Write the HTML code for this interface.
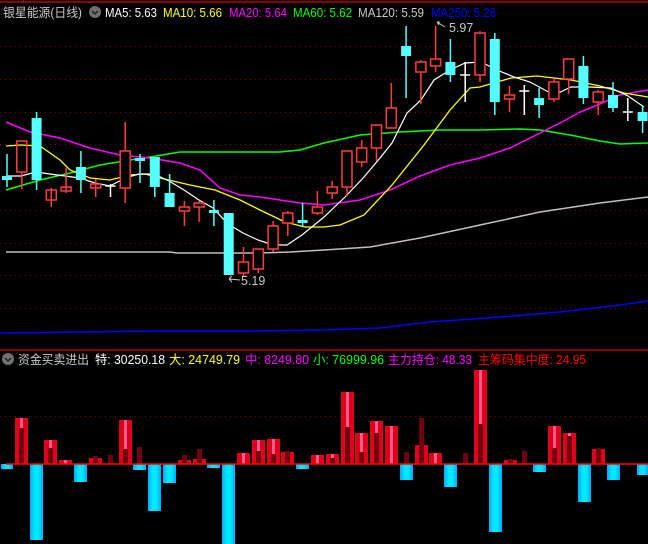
<!DOCTYPE html>
<html><head><meta charset="utf-8">
<style>
html,body{margin:0;padding:0;background:#000;}
body{width:648px;height:544px;overflow:hidden;position:relative;font-family:"Liberation Sans","Noto Sans CJK SC",sans-serif;}
svg{position:absolute;left:0;top:0;}
text{font-family:"Liberation Sans","Noto Sans CJK SC",sans-serif;font-size:12.5px;}
</style></head><body>
<svg width="648" height="544" viewBox="0 0 648 544">
<rect width="648" height="544" fill="#000"/>
<line x1="0" y1="2" x2="648" y2="2" stroke="#c00000" stroke-width="1.5"/>
<line x1="23.5" y1="0" x2="23.5" y2="2" stroke="#c00000"/>
<g stroke="#8a0000" stroke-width="1" stroke-dasharray="1,4">
<line x1="0" y1="46.5" x2="648" y2="46.5"/>
<line x1="0" y1="79.5" x2="648" y2="79.5"/>
<line x1="0" y1="112.5" x2="648" y2="112.5"/>
<line x1="0" y1="144.5" x2="648" y2="144.5"/>
<line x1="0" y1="177.5" x2="648" y2="177.5"/>
<line x1="0" y1="210.5" x2="648" y2="210.5"/>
<line x1="0" y1="243.5" x2="648" y2="243.5"/>
<line x1="0" y1="275.5" x2="648" y2="275.5"/>
<line x1="0" y1="308.5" x2="648" y2="308.5"/>
<line x1="0" y1="416.5" x2="648" y2="416.5"/>
</g>
<text x="3" y="17" fill="#c8c8c8" font-size="13.5" textLength="79" lengthAdjust="spacingAndGlyphs">银星能源(日线)</text>
<circle cx="95" cy="12" r="6" fill="#707070"/>
<path d="M92 11 L95 14 L98 11" stroke="#222" stroke-width="1.5" fill="none"/>
<text x="105" y="17" fill="#ffffff" textLength="52" lengthAdjust="spacingAndGlyphs">MA5: 5.63</text>
<text x="163" y="17" fill="#ffff00" textLength="59" lengthAdjust="spacingAndGlyphs">MA10: 5.66</text>
<text x="229" y="17" fill="#ff00ff" textLength="58" lengthAdjust="spacingAndGlyphs">MA20: 5.64</text>
<text x="293" y="17" fill="#00ff00" textLength="59" lengthAdjust="spacingAndGlyphs">MA60: 5.62</text>
<text x="358" y="17" fill="#c8c8c8" textLength="66" lengthAdjust="spacingAndGlyphs">MA120: 5.59</text>
<text x="431" y="17" fill="#0000ff" textLength="65" lengthAdjust="spacingAndGlyphs">MA250: 5.26</text>

<polyline fill="none" stroke="#0000ff" stroke-width="1.5" points="0,333 160,331 250,331 324,330 380,328 430,322 500,317 560,312 620,305 648,301"/>
<polyline fill="none" stroke="#c0c0c0" stroke-width="1.5" points="6,252 60,252 170,252 177,253 260,253 290,252 324,250 370,247 420,238 480,225 540,212 600,203 648,197"/>
<polyline fill="none" stroke="#00ff00" stroke-width="1.5" points="6,190 40,180 70,173 100,165 130,160 150,157 180,152 220,152 280,152 300,150 324,143 360,135 400,132 440,130 480,130 520,129 540,130 570,135 600,141 620,144 648,143"/>
<polyline fill="none" stroke="#ff00ff" stroke-width="1.5" points="6,122 30,132 60,138 90,148 120,155 150,158 180,163 200,170 220,188 240,195 260,197 280,200 300,203 324,205 360,200 390,190 420,176 450,165 480,158 510,148 530,138 560,123 580,112 600,104 620,95 648,90"/>
<polyline fill="none" stroke="#ffff00" stroke-width="1.3" points="6,146 21,145 40,146 60,160 70,170 90,178 110,180 130,175 145,174 160,178 190,185 215,190 240,200 260,210 285,222 305,227 324,227 340,225 364,215 392,185 424,145 450,110 470,88 480,87 511,78 537,76 571,80 600,86 624,93 648,97"/>
<polyline fill="none" stroke="#ffffff" stroke-width="1.2" points="7,176 21,176 36,172 50,174 65,176 80,178 95,183 110,186 125,178 139,174 154,174 169,181 184,190 199,200 213,208 228,224 243,233 258,240 273,245 287,245 302,235 324,217 345,197 364,177 380,158 392,143 407,113 421,100 434,80 450,70 465,63 481,62 497,70 514,77 530,82 554,95 571,87 590,87 611,88 628,96 644,107"/>

<g stroke-width="1.5">
<g stroke="#54ffff" fill="#54ffff">
<line x1="7" y1="154" x2="7" y2="187"/><rect x="2" y="176" width="10" height="4" stroke="none"/>
<line x1="36.6" y1="112" x2="36.6" y2="190"/><rect x="31.6" y="118" width="10" height="62" stroke="none"/>
<line x1="80.9" y1="151" x2="80.9" y2="193"/><rect x="75.9" y="167" width="10" height="13" stroke="none"/>
<line x1="140" y1="154" x2="140" y2="183"/><rect x="135" y="158" width="10" height="3" stroke="none"/>
<line x1="154.8" y1="157" x2="154.8" y2="197"/><rect x="149.8" y="157" width="10" height="30" stroke="none"/>
<line x1="169.6" y1="174" x2="169.6" y2="207"/><rect x="164.6" y="193" width="10" height="14" stroke="none"/>
<line x1="213.9" y1="200" x2="213.9" y2="226"/><rect x="208.9" y="210" width="10" height="3" stroke="none"/>
<rect x="223.7" y="213" width="10" height="62" stroke="none"/>
<line x1="302.6" y1="203" x2="302.6" y2="226"/><rect x="297.6" y="220" width="10" height="3" stroke="none"/>
<line x1="406.1" y1="26" x2="406.1" y2="98"/><rect x="401.1" y="46" width="10" height="10" stroke="none"/>
<line x1="450.4" y1="39" x2="450.4" y2="82"/><rect x="445.4" y="62" width="10" height="13" stroke="none"/>
<line x1="494.8" y1="33" x2="494.8" y2="115"/><rect x="489.8" y="39" width="10" height="63" stroke="none"/>
<line x1="539.1" y1="88" x2="539.1" y2="118"/><rect x="534.1" y="98" width="10" height="7" stroke="none"/>
<line x1="583.4" y1="56" x2="583.4" y2="104"/><rect x="578.4" y="66" width="10" height="32" stroke="none"/>
<line x1="613" y1="82" x2="613" y2="112"/><rect x="608" y="95" width="10" height="13" stroke="none"/>
<line x1="642.6" y1="106" x2="642.6" y2="133"/><rect x="637.6" y="112" width="10" height="9" stroke="none"/>
</g>
<g stroke="#ffffff">
<line x1="110.5" y1="184" x2="110.5" y2="197"/><line x1="105.5" y1="186" x2="115.5" y2="186"/>
<line x1="465.2" y1="62" x2="465.2" y2="102"/><line x1="460.2" y1="75" x2="470.2" y2="75"/>
<line x1="524.3" y1="85" x2="524.3" y2="115"/><line x1="519.3" y1="91" x2="529.3" y2="91"/>
<line x1="627.8" y1="98" x2="627.8" y2="121"/><line x1="622.8" y1="112" x2="632.8" y2="112"/>
</g>
<g stroke="#ff3c3c" fill="none">
<line x1="21.8" y1="172" x2="21.8" y2="189"/><rect x="16.8" y="141" width="10" height="31"/>
<line x1="51.3" y1="188" x2="51.3" y2="207"/><rect x="46.3" y="190" width="10" height="10"/>
<line x1="66.1" y1="168" x2="66.1" y2="193"/><rect x="61.1" y="187" width="10" height="4"/>
<line x1="95.7" y1="179" x2="95.7" y2="197"/><rect x="90.7" y="184" width="10" height="4"/>
<line x1="125.2" y1="122" x2="125.2" y2="203"/><rect x="120.2" y="151" width="10" height="37" fill="#000"/>
<line x1="184.4" y1="201" x2="184.4" y2="226"/><rect x="179.4" y="207" width="10" height="4" fill="#000"/>
<line x1="199.1" y1="201" x2="199.1" y2="222"/><rect x="194.1" y="203" width="10" height="4" fill="#000"/>
<line x1="243.5" y1="247" x2="243.5" y2="277"/><rect x="238.5" y="262" width="10" height="11" fill="#000"/>
<line x1="258.3" y1="249" x2="258.3" y2="273"/><rect x="253.3" y="249" width="10" height="20" fill="#000"/>
<line x1="273.1" y1="221" x2="273.1" y2="252"/><rect x="268.1" y="226" width="10" height="23" fill="#000"/>
<line x1="287.8" y1="211" x2="287.8" y2="236"/><rect x="282.8" y="213" width="10" height="10" fill="#000"/>
<line x1="317.4" y1="191" x2="317.4" y2="215"/><rect x="312.4" y="207" width="10" height="6" fill="#000"/>
<line x1="332.2" y1="181" x2="332.2" y2="199"/><rect x="327.2" y="187" width="10" height="6" fill="#000"/>
<line x1="347" y1="151" x2="347" y2="196"/><rect x="342" y="151" width="10" height="36" fill="#000"/>
<line x1="361.7" y1="140" x2="361.7" y2="167"/><rect x="356.7" y="148" width="10" height="14" fill="#000"/>
<line x1="376.5" y1="125" x2="376.5" y2="161"/><rect x="371.5" y="125" width="10" height="23" fill="#000"/>
<line x1="391.3" y1="83" x2="391.3" y2="128"/><rect x="386.3" y="108" width="10" height="20" fill="#000"/>
<line x1="420.9" y1="60" x2="420.9" y2="104"/><rect x="415.9" y="62" width="10" height="10" fill="#000"/>
<line x1="435.6" y1="26" x2="435.6" y2="72"/><rect x="430.6" y="59" width="10" height="7" fill="#000"/>
<line x1="480" y1="31" x2="480" y2="82"/><rect x="475" y="33" width="10" height="42" fill="#000"/>
<line x1="509.5" y1="86" x2="509.5" y2="112"/><rect x="504.5" y="95" width="10" height="4" fill="#000"/>
<line x1="553.9" y1="79" x2="553.9" y2="102"/><rect x="548.9" y="82" width="10" height="17" fill="#000"/>
<line x1="568.7" y1="59" x2="568.7" y2="94"/><rect x="563.7" y="59" width="10" height="20" fill="#000"/>
<line x1="598.2" y1="90" x2="598.2" y2="115"/><rect x="593.2" y="92" width="10" height="10" fill="#000"/>
</g>
</g>
<path d="M437 22 L445 27 M437 22 L439 25 M437 22 L440 22" stroke="#c8c8c8" fill="none"/>
<text x="449" y="32" fill="#c8c8c8">5.97</text>
<path d="M229 279 L240 280 M229 279 L232 276 M229 279 L232 282" stroke="#c8c8c8" fill="none"/>
<text x="241" y="285" fill="#c8c8c8">5.19</text>

<line x1="0" y1="350" x2="648" y2="350" stroke="#c00000" stroke-width="1.5"/>
<circle cx="8" cy="359" r="6" fill="#707070"/>
<path d="M5 358 L8 361 L11 358" stroke="#222" stroke-width="1.5" fill="none"/>
<text x="18" y="364" fill="#c8c8c8" textLength="71" lengthAdjust="spacingAndGlyphs">资金买卖进出</text>
<text x="95" y="364" fill="#ffffff" textLength="70" lengthAdjust="spacingAndGlyphs">特: 30250.18</text>
<text x="169" y="364" fill="#ffff00" textLength="71" lengthAdjust="spacingAndGlyphs">大: 24749.79</text>
<text x="245" y="364" fill="#ff00ff" textLength="64" lengthAdjust="spacingAndGlyphs">中: 8249.80</text>
<text x="313" y="364" fill="#00ff00" textLength="71" lengthAdjust="spacingAndGlyphs">小: 76999.96</text>
<text x="388" y="364" fill="#ff00ff" textLength="84" lengthAdjust="spacingAndGlyphs">主力持仓: 48.33</text>
<text x="478" y="364" fill="#ff0000" textLength="108" lengthAdjust="spacingAndGlyphs">主筹码集中度: 24.95</text>

<defs>
<linearGradient id="cy" x1="0" x2="1" y1="0" y2="0">
<stop offset="0" stop-color="#00a8ff"/><stop offset="0.35" stop-color="#00e8ff"/><stop offset="0.65" stop-color="#00e8ff"/><stop offset="1" stop-color="#00a8ff"/>
</linearGradient>
</defs>
<g fill="url(#cy)">
<rect x="1" y="464" width="12" height="5"/>
<rect x="30" y="464" width="13" height="76"/>
<rect x="74" y="464" width="13" height="18"/>
<rect x="133" y="464" width="13" height="6"/>
<rect x="148" y="464" width="13" height="47"/>
<rect x="163" y="464" width="13" height="19"/>
<rect x="207" y="464" width="13" height="4"/>
<rect x="222" y="464" width="13" height="80"/>
<rect x="296" y="464" width="13" height="5"/>
<rect x="400" y="464" width="13" height="16"/>
<rect x="444" y="464" width="13" height="23"/>
<rect x="489" y="464" width="13" height="68"/>
<rect x="533" y="464" width="13" height="8"/>
<rect x="578" y="464" width="13" height="38"/>
<rect x="607" y="464" width="13" height="16"/>
<rect x="637" y="464" width="11" height="11"/>
</g>
<g fill="#e0001a">
<rect x="15" y="418" width="13" height="46"/>
<rect x="44" y="440" width="13" height="24"/>
<rect x="59" y="460" width="13" height="4"/>
<rect x="89" y="458" width="13" height="6"/>
<rect x="119" y="420" width="13" height="44"/>
<rect x="178" y="460" width="13" height="4"/>
<rect x="193" y="459" width="13" height="5"/>
<rect x="237" y="453" width="13" height="11"/>
<rect x="252" y="440" width="13" height="24"/>
<rect x="267" y="439" width="13" height="25"/>
<rect x="281" y="452" width="13" height="12"/>
<rect x="311" y="455" width="13" height="9"/>
<rect x="326" y="454" width="13" height="10"/>
<rect x="341" y="392" width="13" height="72"/>
<rect x="355" y="433" width="13" height="31"/>
<rect x="370" y="421" width="13" height="43"/>
<rect x="385" y="426" width="13" height="38"/>
<rect x="415" y="445" width="13" height="19"/>
<rect x="429" y="453" width="13" height="11"/>
<rect x="474" y="370" width="13" height="94"/>
<rect x="504" y="460" width="13" height="4"/>
<rect x="548" y="426" width="13" height="38"/>
<rect x="563" y="433" width="13" height="31"/>
<rect x="592" y="449" width="13" height="15"/>
</g>
<g fill="#ff5a8c">
<rect x="20" y="418" width="3" height="46"/>
<rect x="49" y="440" width="3" height="24"/>
<rect x="64" y="460" width="3" height="4"/>
<rect x="124" y="420" width="3" height="44"/>
<rect x="242" y="453" width="3" height="11"/>
<rect x="257" y="440" width="3" height="24"/>
<rect x="272" y="439" width="3" height="25"/>
<rect x="316" y="455" width="3" height="9"/>
<rect x="331" y="454" width="3" height="10"/>
<rect x="346" y="392" width="3" height="72"/>
<rect x="360" y="433" width="3" height="31"/>
<rect x="375" y="421" width="3" height="43"/>
<rect x="390" y="426" width="3" height="38"/>
<rect x="434" y="453" width="3" height="11"/>
<rect x="479" y="370" width="3" height="94"/>
<rect x="553" y="426" width="3" height="38"/>
<rect x="568" y="433" width="3" height="31"/>
</g>
<g fill="#700010">
<rect x="19" y="428" width="5" height="36"/>
<rect x="48" y="448" width="5" height="16"/>
<rect x="93" y="456" width="5" height="8"/>
<rect x="108" y="455" width="5" height="9"/>
<rect x="123" y="449" width="5" height="15"/>
<rect x="137" y="447" width="5" height="17"/>
<rect x="182" y="455" width="5" height="9"/>
<rect x="197" y="449" width="5" height="15"/>
<rect x="256" y="451" width="5" height="13"/>
<rect x="271" y="454" width="5" height="10"/>
<rect x="285" y="451" width="5" height="13"/>
<rect x="330" y="458" width="5" height="6"/>
<rect x="345" y="427" width="5" height="37"/>
<rect x="359" y="452" width="5" height="12"/>
<rect x="374" y="433" width="5" height="31"/>
<rect x="404" y="452" width="5" height="12"/>
<rect x="419" y="418" width="5" height="46"/>
<rect x="463" y="453" width="5" height="11"/>
<rect x="478" y="424" width="5" height="40"/>
<rect x="508" y="459" width="5" height="5"/>
<rect x="522" y="451" width="5" height="13"/>
<rect x="552" y="448" width="5" height="16"/>
<rect x="567" y="436" width="5" height="28"/>
<rect x="596" y="448" width="5" height="16"/>
</g>
<line x1="6" y1="464" x2="648" y2="464" stroke="#ff0000" stroke-width="1.5"/>
</svg>
</body></html>
